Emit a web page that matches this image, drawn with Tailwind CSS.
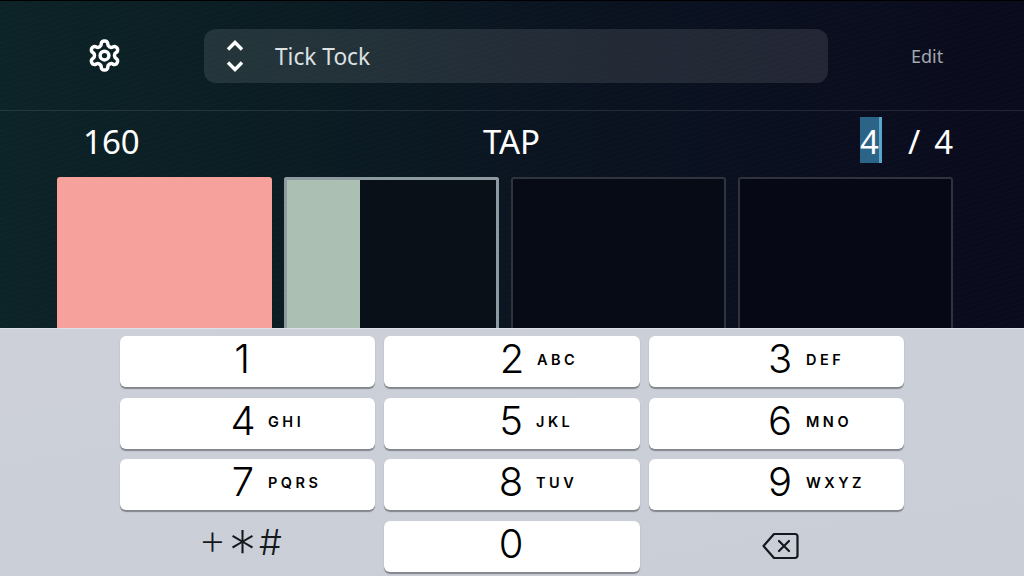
<!DOCTYPE html>
<html lang="en">
<head>
    <meta charset="UTF-8">
    <meta name="viewport" content="width=device-width, initial-scale=1.0">
    <title>Tick Tock</title>
    <script src="https://cdn.jsdelivr.net/npm/@tailwindcss/browser@4"></script>
</head>
<body class="w-[1024px] h-[576px] overflow-hidden flex flex-col font-['Noto_Sans',sans-serif]">
    <main class="h-[328px] flex flex-col overflow-hidden border-t border-black bg-[repeating-linear-gradient(165deg,rgba(255,255,255,0.012)_0px,rgba(255,255,255,0.012)_1px,transparent_1px,transparent_5px),linear-gradient(90deg,#0c2327_0%,#0b1c23_30%,#0a1220_60%,#0a0b1d_100%)]">
        <!-- top bar -->
        <div class="h-[110px] shrink-0 flex items-center border-b border-white/10">
            <div class="w-[204px] flex justify-center pl-[4px]">
                <svg class="w-[35px] h-[35px]" viewBox="0 0 24 24" fill="none" stroke="white" stroke-width="2.4" stroke-linecap="round" stroke-linejoin="round">
                    <path d="M12.22 2h-.44a2 2 0 0 0-2 2v.18a2 2 0 0 1-1 1.73l-.43.25a2 2 0 0 1-2 0l-.15-.08a2 2 0 0 0-2.73.73l-.22.38a2 2 0 0 0 .73 2.73l.15.1a2 2 0 0 1 1 1.72v.51a2 2 0 0 1-1 1.74l-.15.09a2 2 0 0 0-.73 2.73l.22.38a2 2 0 0 0 2.73.73l.15-.08a2 2 0 0 1 2 0l.43.25a2 2 0 0 1 1 1.73V20a2 2 0 0 0 2 2h.44a2 2 0 0 0 2-2v-.18a2 2 0 0 1 1-1.73l.43-.25a2 2 0 0 1 2 0l.15.08a2 2 0 0 0 2.73-.73l.22-.39a2 2 0 0 0-.73-2.73l-.15-.08a2 2 0 0 1-1-1.74v-.5a2 2 0 0 1 1-1.74l.15-.09a2 2 0 0 0 .73-2.73l-.22-.38a2 2 0 0 0-2.73-.73l-.15.08a2 2 0 0 1-2 0l-.43-.25a2 2 0 0 1-1-1.73V4a2 2 0 0 0-2-2z"/>
                    <circle cx="12" cy="12" r="3"/>
                </svg>
            </div>
            <div class="w-[624px] h-[54px] rounded-xl bg-white/10 flex items-center">
                <div class="w-[62px] mr-[9px] flex flex-col items-center gap-[10px]">
                    <svg class="w-[18px] h-[11px]" viewBox="0 0 18 11" fill="none" stroke="white" stroke-width="3.4"><path d="M2 9.5L9 2.5L16 9.5"/></svg>
                    <svg class="w-[18px] h-[11px]" viewBox="0 0 18 11" fill="none" stroke="white" stroke-width="3.4"><path d="M2 1.5L9 8.5L16 1.5"/></svg>
                </div>
                <span class="pt-[3px] text-[22.7px] text-[#dde1e2]">Tick Tock</span>
            </div>
            <span class="ml-[83px] pt-[2px] text-[18px] text-[#a3a7ae]">Edit</span>
        </div>
        <!-- tempo row -->
        <div class="h-[66px] shrink-0 grid grid-cols-[1fr_auto_1fr] items-center pb-[8px] pl-[83px] pr-[71px] text-[33px] text-white">
            <span class="pt-[4px]">160</span>
            <span class="pt-[4px] pr-[13px]">TAP</span>
            <div class="justify-self-end w-[93px] flex items-center">
                <span class="w-[22px] h-[46px] pt-[4px] flex items-center bg-[#2c6488] border-r-[3px] border-[#5aa6cc]">4</span>
                <span class="pt-[4px] ml-[26px]">/</span>
                <span class="pt-[4px] ml-[14px]">4</span>
            </div>
        </div>
        <!-- beat pads -->
        <div class="grid grid-cols-4 gap-[12px] pl-[57px] pr-[71px] h-[200px]">
            <div class="rounded-t-[3px] bg-[#f6a19c]"></div>
            <div class="rounded-t-[3px] border-[3px] border-b-0 border-[#8d9a9f] bg-[#0a1017]">
                <div class="w-[73px] h-full bg-[#abc0b3]"></div>
            </div>
            <div class="rounded-t-[3px] border-2 border-b-0 border-[#30343f] bg-[#070b15]"></div>
            <div class="rounded-t-[3px] border-2 border-b-0 border-[#30323f] bg-[#070816]"></div>
        </div>
    </main>
    <!-- number pad -->
    <section class="flex-1 pt-[7px] pl-[120px] pr-[120px] border-t border-[#dde0e5] bg-[linear-gradient(170deg,#ced0d9_0%,#cacfd8_40%,#c9ced7_100%)] font-['Inter',sans-serif] text-black">
        <div class="grid grid-cols-[255px_256px_255px] gap-x-[9px] gap-y-[10.67px] auto-rows-[51px]">
            <div class="bg-white rounded-[6px] shadow-[0_1.5px_1px_#83868c] flex items-center pl-[102px]"><span class="w-[40px] pb-[5px] text-center text-[40px] font-light">1</span></div>
            <div class="bg-white rounded-[6px] shadow-[0_1.5px_1px_#83868c] flex items-center pl-[108px]"><span class="w-[40px] pb-[5px] text-center text-[40px] font-light">2</span><span class="ml-[5px] pb-[3px] text-[14.5px] font-semibold tracking-[3.5px]">ABC</span></div>
            <div class="bg-white rounded-[6px] shadow-[0_1.5px_1px_#83868c] flex items-center pl-[111px]"><span class="w-[40px] pb-[5px] text-center text-[40px] font-light">3</span><span class="ml-[6px] pb-[3px] text-[14.5px] font-semibold tracking-[3.5px]">DEF</span></div>
            <div class="bg-white rounded-[6px] shadow-[0_1.5px_1px_#83868c] flex items-center pl-[103px]"><span class="w-[40px] pb-[5px] text-center text-[40px] font-light">4</span><span class="ml-[5px] pb-[3px] text-[14.5px] font-semibold tracking-[3.5px]">GHI</span></div>
            <div class="bg-white rounded-[6px] shadow-[0_1.5px_1px_#83868c] flex items-center pl-[107px]"><span class="w-[40px] pb-[5px] text-center text-[40px] font-light">5</span><span class="ml-[5px] pb-[3px] text-[14.5px] font-semibold tracking-[3.5px]">JKL</span></div>
            <div class="bg-white rounded-[6px] shadow-[0_1.5px_1px_#83868c] flex items-center pl-[111px]"><span class="w-[40px] pb-[5px] text-center text-[40px] font-light">6</span><span class="ml-[6px] pb-[3px] text-[14.5px] font-semibold tracking-[3.5px]">MNO</span></div>
            <div class="bg-white rounded-[6px] shadow-[0_1.5px_1px_#83868c] flex items-center pl-[103px]"><span class="w-[40px] pb-[5px] text-center text-[40px] font-light">7</span><span class="ml-[5px] pb-[3px] text-[14.5px] font-semibold tracking-[3.5px]">PQRS</span></div>
            <div class="bg-white rounded-[6px] shadow-[0_1.5px_1px_#83868c] flex items-center pl-[107px]"><span class="w-[40px] pb-[5px] text-center text-[40px] font-light">8</span><span class="ml-[5px] pb-[3px] text-[14.5px] font-semibold tracking-[3.5px]">TUV</span></div>
            <div class="bg-white rounded-[6px] shadow-[0_1.5px_1px_#83868c] flex items-center pl-[111px]"><span class="w-[40px] pb-[5px] text-center text-[40px] font-light">9</span><span class="ml-[6px] pb-[3px] text-[14.5px] font-semibold tracking-[3.5px]">WXYZ</span></div>
            <div class="flex items-center justify-center pr-[14px] font-light text-[#15181c]"><span class="w-[30px] pb-[14px] text-center text-[44px] font-extralight leading-[36px]">+</span><span class="w-[30px] pt-[9px] text-center text-[56px] font-extralight leading-[40px]">*</span><span class="w-[26px] pb-[9px] text-center text-[36px] leading-[36px]">#</span></div>
            <div class="bg-white rounded-[6px] shadow-[0_1.5px_1px_#83868c] flex items-center pl-[107px]"><span class="w-[40px] pb-[5px] text-center text-[40px] font-light">0</span></div>
            <div class="flex items-center justify-center pl-[8px]">
                <svg class="w-[37px] h-[28px]" viewBox="0 0 37 28" fill="none" stroke="#15181c" stroke-width="2.2" stroke-linejoin="round" stroke-linecap="round">
                    <path d="M12 2H33a2.5 2.5 0 0 1 2.5 2.5V23.5A2.5 2.5 0 0 1 33 26H12L1.5 14Z"/>
                    <path d="M17 9L27 19M27 9L17 19"/>
                </svg>
            </div>
        </div>
    </section>
</body>
</html>
